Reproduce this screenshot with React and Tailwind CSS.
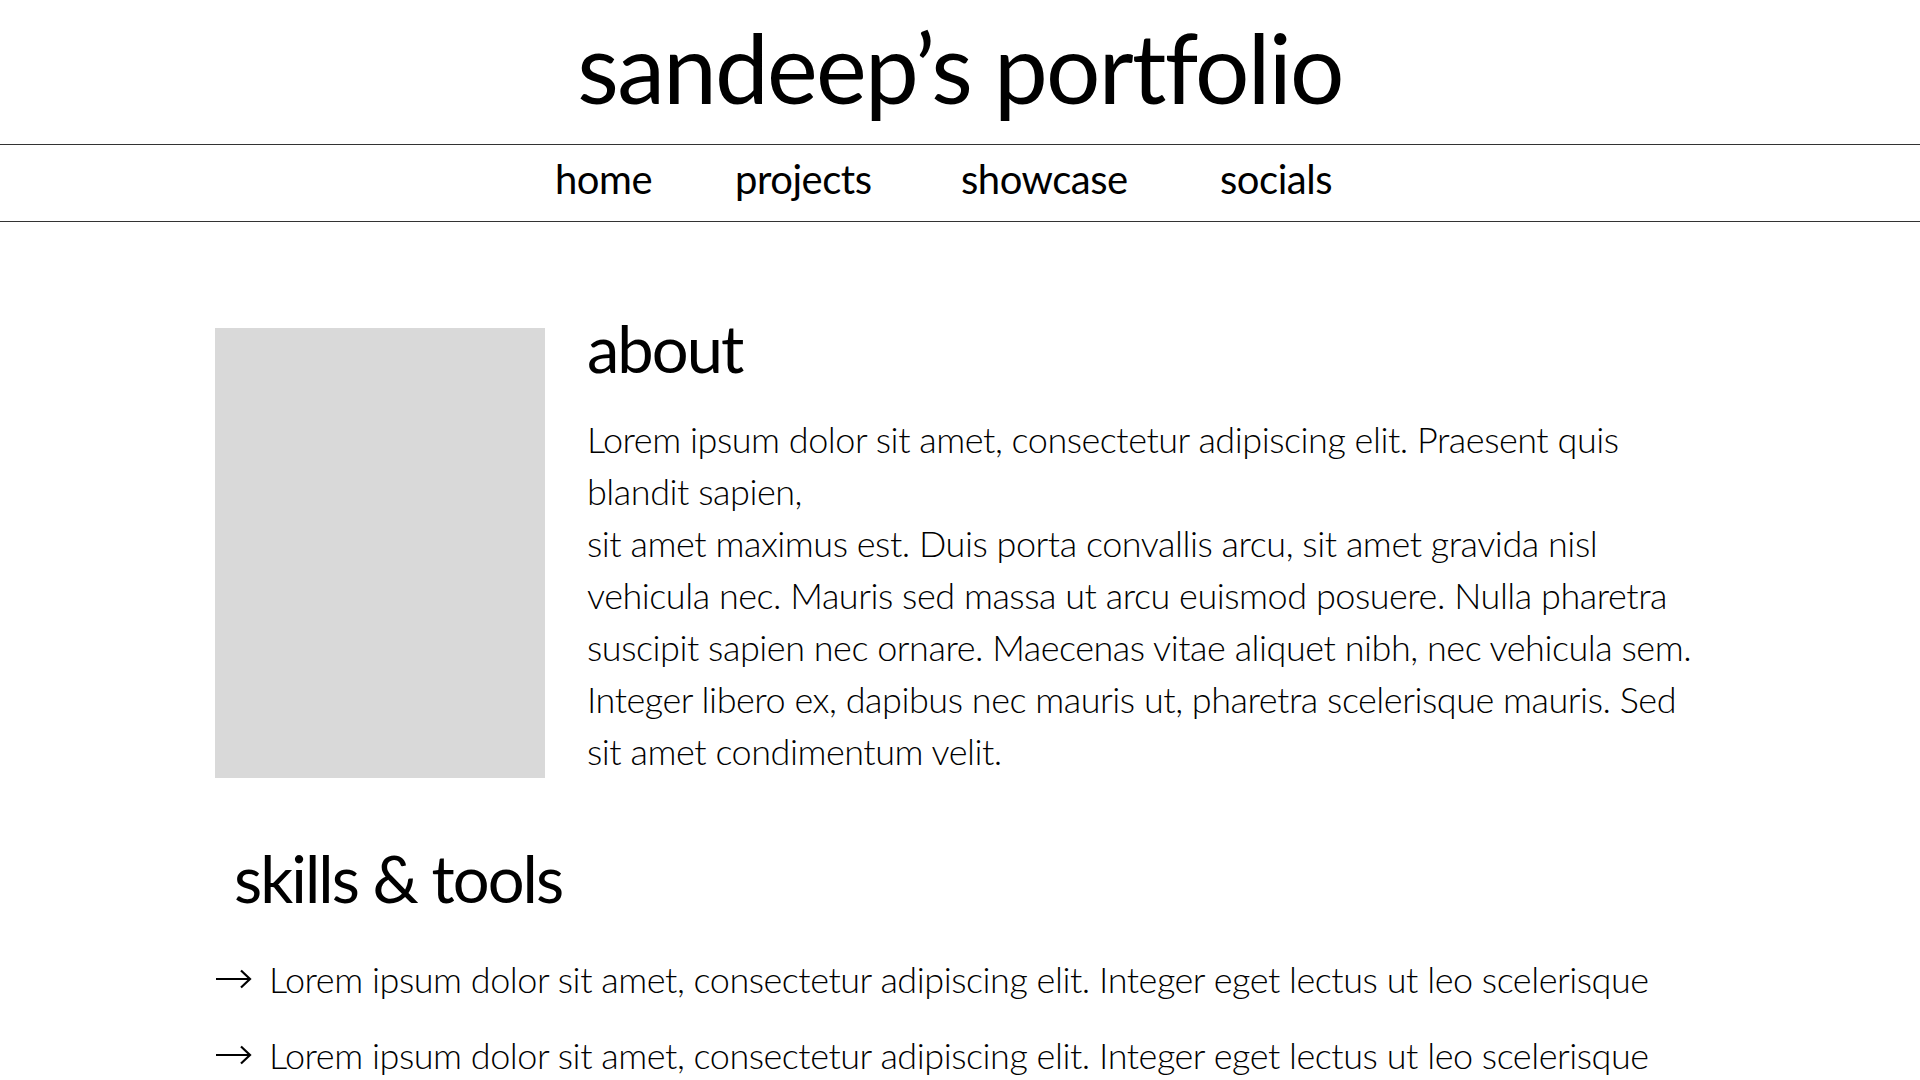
const aboutLines = [
  "Lorem ipsum dolor sit amet, consectetur adipiscing elit. Praesent quis",
  "blandit sapien,",
  "sit amet maximus est. Duis porta convallis arcu, sit amet gravida nisl",
  "vehicula nec. Mauris sed massa ut arcu euismod posuere. Nulla pharetra",
  "suscipit sapien nec ornare. Maecenas vitae aliquet nibh, nec vehicula sem.",
  "Integer libero ex, dapibus nec mauris ut, pharetra scelerisque mauris. Sed",
  "sit amet condimentum velit.",
];

const skills = [
  "Lorem ipsum dolor sit amet, consectetur adipiscing elit. Integer eget lectus ut leo scelerisque",
  "Lorem ipsum dolor sit amet, consectetur adipiscing elit. Integer eget lectus ut leo scelerisque",
];

function Arrow() {
  return (
    <svg width="37" height="20" viewBox="0 0 37 20" fill="none" className="shrink-0">
      <path d="M1 10H35" stroke="black" strokeWidth="2.2" />
      <path d="M26 1.5L35 10L26 18.5" stroke="black" strokeWidth="2.2" strokeLinejoin="miter" />
    </svg>
  );
}

export default function App() {
  return (
    <div className="min-h-screen w-full overflow-hidden bg-white text-black font-['Lato',sans-serif]">
      <header className="h-[144px] flex justify-center">
        <h1 className="pt-[7px] text-[96px] leading-[120px] font-normal tracking-[-0.018em]">sandeep’s portfolio</h1>
      </header>

      <nav className="h-[78px] border-y border-[#333] flex justify-center items-start pt-[13px]">
        <div className="flex mr-[34px] text-[40px] leading-[42px] font-normal tracking-[-0.012em]">
          <a className="w-[180px]">home</a>
          <a className="w-[226px]">projects</a>
          <a className="w-[259px]">showcase</a>
          <a className="w-[111px]">socials</a>
        </div>
      </nav>

      <main className="w-[1490px] mx-auto pt-[106px]">
        <section className="flex items-start">
          <div className="w-[330px] h-[450px] bg-[#d9d9d9] shrink-0" />
          <div className="ml-[42px]">
            <h2 className="text-[65px] leading-[40px] font-normal tracking-[-0.03em]">about</h2>
            <div className="mt-[45px] text-[36px] leading-[52px] font-light tracking-[-0.013em] whitespace-nowrap">
              {aboutLines.map((l, i) => (
                <p key={i}>{l}</p>
              ))}
            </div>
          </div>
        </section>

        <h2 className="mt-[80px] ml-[19px] text-[65px] leading-[40px] font-normal tracking-[-0.03em]">skills &amp; tools</h2>

        <ul className="mt-[55px] flex flex-col gap-[24px]">
          {skills.map((s, i) => (
            <li key={i} className="flex items-center gap-[17px] text-[36px] leading-[52px] font-light tracking-[-0.013em] whitespace-nowrap">
              <Arrow />
              <span>{s}</span>
            </li>
          ))}
        </ul>
      </main>
    </div>
  );
}
